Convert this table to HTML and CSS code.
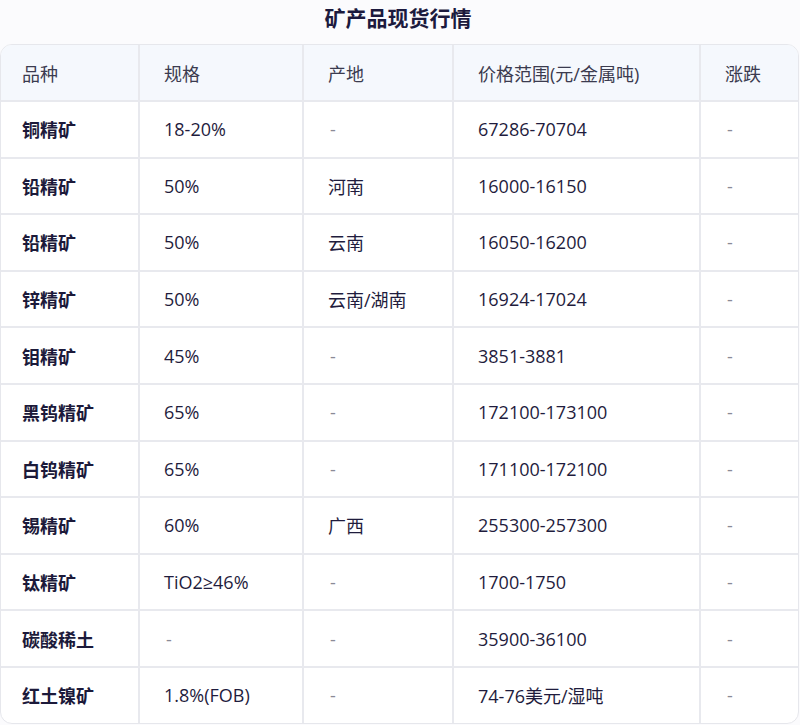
FILE: index.html
```html
<!DOCTYPE html>
<html lang="zh">
<head>
<meta charset="utf-8">
<title>矿产品现货行情</title>
<link rel="stylesheet" href="styles.css">
</head>
<body>
<div class="page">
  <h1 class="title">矿产品现货行情</h1>
  <div class="table-wrap">
    <table class="market">
      <colgroup>
        <col class="c1"><col class="c2"><col class="c3"><col class="c4"><col class="c5">
      </colgroup>
      <thead>
        <tr><th>品种</th><th>规格</th><th>产地</th><th>价格范围(元/金属吨)</th><th>涨跌</th></tr>
      </thead>
      <tbody>
        <tr><td class="name">铜精矿</td><td>18-20%</td><td class="dash">-</td><td>67286-70704</td><td class="dash">-</td></tr>
        <tr><td class="name">铅精矿</td><td>50%</td><td>河南</td><td>16000-16150</td><td class="dash">-</td></tr>
        <tr><td class="name">铅精矿</td><td>50%</td><td>云南</td><td>16050-16200</td><td class="dash">-</td></tr>
        <tr><td class="name">锌精矿</td><td>50%</td><td>云南/湖南</td><td>16924-17024</td><td class="dash">-</td></tr>
        <tr><td class="name">钼精矿</td><td>45%</td><td class="dash">-</td><td>3851-3881</td><td class="dash">-</td></tr>
        <tr><td class="name">黑钨精矿</td><td>65%</td><td class="dash">-</td><td>172100-173100</td><td class="dash">-</td></tr>
        <tr><td class="name">白钨精矿</td><td>65%</td><td class="dash">-</td><td>171100-172100</td><td class="dash">-</td></tr>
        <tr><td class="name">锡精矿</td><td>60%</td><td>广西</td><td>255300-257300</td><td class="dash">-</td></tr>
        <tr><td class="name">钛精矿</td><td>TiO2≥46%</td><td class="dash">-</td><td>1700-1750</td><td class="dash">-</td></tr>
        <tr><td class="name">碳酸稀土</td><td class="dash">-</td><td class="dash">-</td><td>35900-36100</td><td class="dash">-</td></tr>
        <tr><td class="name">红土镍矿</td><td>1.8%(FOB)</td><td class="dash">-</td><td>74-76美元/湿吨</td><td class="dash">-</td></tr>
      </tbody>
    </table>
  </div>
</div>
</body>
</html>
```

FILE: styles.css
```css
html, body {
  margin: 0;
  padding: 0;
  background: #fbfbfd;
}
body {
  font-family: "Open Sans", "Noto Sans CJK SC", sans-serif;
  color: #1f1c3d;
}
.page {
  width: 800px;
}
.title {
  margin: 0;
  height: 44px;
  line-height: 36px;
  text-align: center;
  font-size: 21px;
  font-weight: 700;
  color: #1c1a3e;
  padding-right: 4px;
}
.table-wrap {
  width: 799px;
  border: 1px solid #e6e7ec;
  border-radius: 12px;
  overflow: hidden;
  background: #fff;
  box-sizing: border-box;
}
.market {
  width: 100%;
  border-collapse: collapse;
  table-layout: fixed;
  font-size: 18px;
}
.c1 { width: 138px; }
.c2 { width: 164px; }
.c3 { width: 150px; }
.c4 { width: 247px; }
.c5 { width: auto; }
.market th, .market td {
  text-align: left;
  padding: 0 0 0 24px;
  border-left: 2px solid #e8e9ee;
  border-top: 2px solid #e8e9ee;
  white-space: nowrap;
}
.market th:first-child, .market td:first-child {
  border-left: none;
  padding-left: 21px;
}
.market thead th {
  border-top: none;
  height: 55px;
  background: #f5f8fd;
  font-weight: 400;
  color: #3b3b4f;
}
.market tbody td {
  height: 54.6px;
  color: #1f1c3d;
}
.market td.name {
  font-weight: 700;
  color: #1c1a3a;
}
.market td.dash {
  color: #8a8a96;
  padding-left: 26px;
}
```
